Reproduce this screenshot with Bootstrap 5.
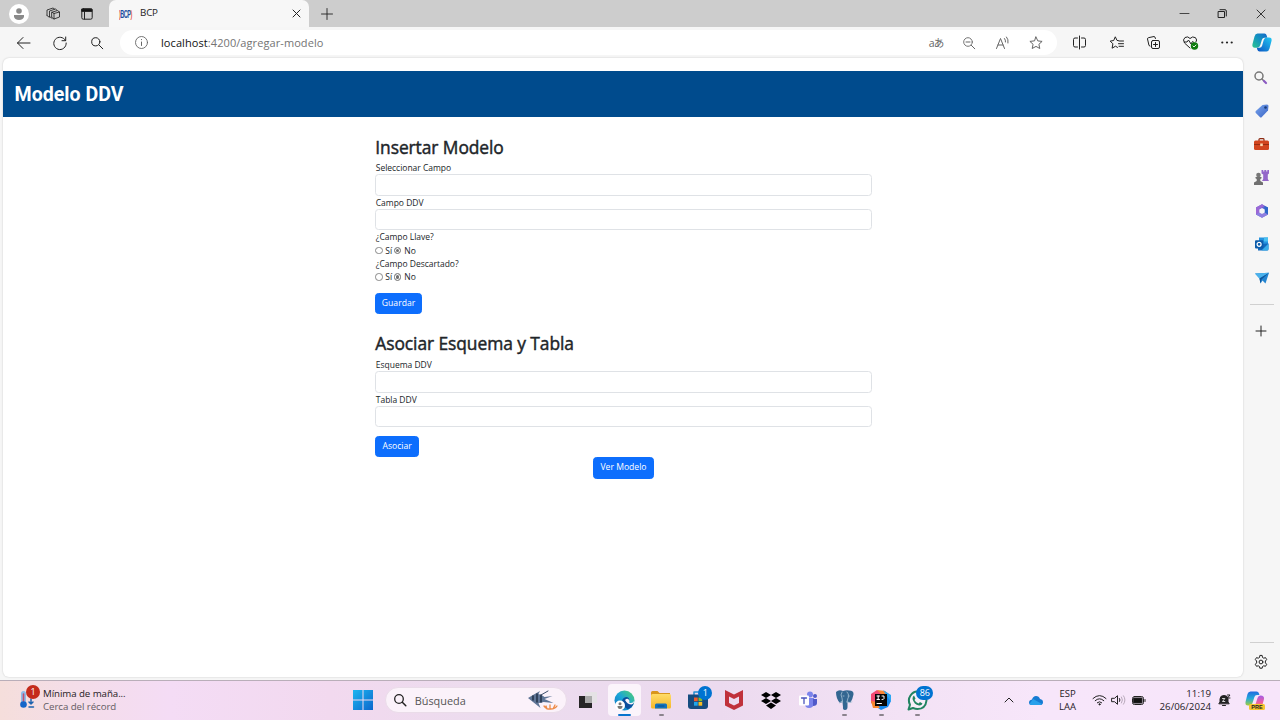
<!DOCTYPE html>
<html lang="es">
<head>
<meta charset="utf-8">
<meta name="viewport" content="width=device-width, initial-scale=1">
<title>BCP</title>
<link href="https://cdn.jsdelivr.net/npm/bootstrap@5.3.0/dist/css/bootstrap.min.css" rel="stylesheet">
<script src="https://cdn.jsdelivr.net/npm/bootstrap@5.3.0/dist/js/bootstrap.bundle.min.js" defer></script>
<style>
html{font-size:8.89px}
body{width:1280px;height:720px;overflow:hidden;background:#f6f6f6;font-family:"Open Sans","Noto Sans",sans-serif;color:#212529}
svg{display:block;flex:none;overflow:visible;fill:none;stroke:#222;stroke-width:1;stroke-linecap:round;stroke-linejoin:round}
.slot{display:flex;align-items:center;justify-content:center;flex:none}
.tabstrip{height:27px;background:#cdcdcd}
.tabstrip .slot{width:36px}
.tabstrip .avatar{width:20px;height:20px;border-radius:50%;background:#fff}
.browser-tab{width:200px;height:27px;background:#f7f7f7;border-radius:7px 7px 0 0;padding:0 8px 0 10px;font-size:9.800px;letter-spacing:-.2px;color:#222}
.favicon{font:bold 11px "Liberation Sans",sans-serif;letter-spacing:-1px;color:#1c4ea0;width:12px;transform:scaleX(.5);transform-origin:left;white-space:nowrap}
.favicon i{color:#e2574c;font-style:normal}
.toolbar{height:31px}
.toolbar .slot{width:37px}
.address{width:937px;height:25px;background:#fff;border-radius:13px;font-size:11px;color:#747474;letter-spacing:.08px;padding-right:4px}
.address b{font-weight:400;color:#111}
.address .slot{width:33.4px}
.address svg{stroke:#666}
.viewport{width:1240px;height:619px;margin-left:3.49px;background:#fff;border-radius:6px;box-shadow:0 0 2px rgba(0,0,0,.2);padding-top:13px}
.brandbar{height:46px;background:#004b8d;color:#fff;font:700 19.6px Roboto,sans-serif;padding-left:11px}
.model-form{width:496.4px;margin:19.5px auto 0}
.model-form h2{font-size:17.4px;font-weight:500;line-height:21.3px;margin-bottom:3.2px;letter-spacing:-.07px;-webkit-text-stroke:.45px #212529}
.model-form label,.model-form .radios{display:block;height:13.35px;line-height:13.35px;font-size:8.5px;letter-spacing:-.02px;padding-left:.5px}
.model-form .form-control{height:21.3px;min-height:0;padding:2px 6px;border-radius:3.5px;border-color:#dfe2e6}
.model-form .radios{display:flex;align-items:center;padding-left:0}
.radios .dot{width:7.500px;height:7.500px;border:1px solid #888;border-radius:50%;margin-right:2.5px}
.radios .dot.on{background:#707070;box-shadow:inset 0 0 0 1px #fff;margin-right:3.2px}
.btn-page{height:21.3px;padding:0;font-size:8.6px;line-height:19.3px;border-radius:3.5px;display:block}
.sidebar{width:36px}
.sidebar .slot{height:33.4px;width:36px}
.rule{width:24px;height:1px;background:#d0d0d0}
.taskbar{height:40px;border-top:1px solid #b9aeb9;background:linear-gradient(90deg,#f5dedb 0,#f4dde8 70px,#f4dcf5 170px,#f2d9ef 330px,#ecdcee 480px,#ecdaef 720px,#f3e2f5 900px,#f7e6fa 1040px,#f7e5fa 100%);margin-top:3px;font-size:9.700px;line-height:13px;color:#252025;padding-bottom:1px}
.taskbar .app{width:36.7px;height:38px;position:relative}
.running::after{content:"";position:absolute;bottom:3px;left:16px;width:5px;height:2px;border-radius:1px;background:#8b838d}
.focused::before{content:"";position:absolute;inset:3px 2px;background:#fbf4fb;border-radius:4px}
.focused::after{left:12px;width:13px;background:#0873ce}
.app svg{z-index:1;position:relative}
.count{position:absolute;background:#0073d1;color:#fff;border-radius:9px;height:14px;min-width:14px;text-align:center;font-size:9px;line-height:14px;z-index:2}
.search{width:182px;height:26px;border-radius:13px;background:#fbf2fa;border:1px solid #eadce9;padding:0 6px 0 9px;color:#555}
.fillicon{stroke:none}
</style>
</head>
<body class="d-flex flex-column">
<svg width="0" height="0" style="position:absolute"><defs>
<linearGradient id="gBlue" x1="0" y1="0" x2="1" y2="1"><stop stop-color="#1eb6f0"/><stop offset="1" stop-color="#0b66cc"/></linearGradient>
<linearGradient id="gTeal" x1="0" y1="1" x2="1" y2="0"><stop stop-color="#2bc58d"/><stop offset=".5" stop-color="#1395c0"/><stop offset="1" stop-color="#1668c8"/></linearGradient>
<linearGradient id="gCyan" x1="0" y1="1" x2="1" y2="0"><stop stop-color="#0a53c2"/><stop offset="1" stop-color="#21c9f3"/></linearGradient>
<linearGradient id="gTag" x1="0" y1="0" x2="1" y2="1"><stop stop-color="#79a6ee"/><stop offset="1" stop-color="#3a63c4"/></linearGradient>
<linearGradient id="gEdge" x1="0" y1="1" x2="1" y2="0"><stop stop-color="#0f6fc0"/><stop offset=".5" stop-color="#1ba5d8"/><stop offset="1" stop-color="#55d36b"/></linearGradient>
<linearGradient id="gFold" x1="0" y1="0" x2="0" y2="1"><stop stop-color="#ffdc68"/><stop offset="1" stop-color="#f5b72a"/></linearGradient>
<linearGradient id="gWarm" x1="0" y1="0" x2="0" y2="1"><stop stop-color="#a45be6"/><stop offset=".5" stop-color="#ee5fa0"/><stop offset="1" stop-color="#f9a33b"/></linearGradient>
<linearGradient id="gCool" x1="0" y1="0" x2="0" y2="1"><stop stop-color="#1f6be0"/><stop offset=".5" stop-color="#25a9d8"/><stop offset="1" stop-color="#a4cc3c"/></linearGradient>
</defs></svg>

<header class="tabstrip d-flex align-items-center">
  <div class="slot" style="width:37px"><div class="avatar slot"><svg class="fillicon" width="12" height="14"><circle cx="6" cy="4" r="2.800" fill="#8a8a8a"/><path d="M1 8h10v1.500a5 3.500 0 0 1-10 0z" fill="#8a8a8a"/></svg></div></div>
  <div class="slot" style="width:31px"><svg width="14" height="14"><path d="M6 5.200 11.500 3.500 13.500 5v5L8 12 6 10.500zM6 5.200 8 6.500 13.500 5M8 6.500V12M3.500 9.500V4L9.500 2 11 3.300M1 8.500V3L7 1 8.500 2M6 11.300 3.500 9.500M3.300 10.300 1 8.500" style="stroke-width:.85"/></svg></div>
  <div class="slot" style="width:37px"><svg width="12" height="12"><rect x=".8" y=".8" width="10.400" height="10.400" rx="1.500"/><path d="M1 1h10v2.400H1z" fill="#111"/><path d="M3.500 3.500V11"/></svg></div>
  <div class="browser-tab d-flex align-items-center" style="margin-left:4px"><span class="favicon"><i>)</i>BCP<i>)</i></span><span style="margin-left:9px">BCP</span><svg class="ms-auto" width="9" height="9"><path d="m1 1 7 7M8 1 1 8"/></svg></div>
  <div class="slot"><svg width="12" height="12"><path d="M6 .5v11M.5 6h11" style="stroke-width:.9"/></svg></div>
  <div class="d-flex ms-auto">
    <div class="slot" style="width:38px"><svg width="9" height="9" style="margin-right:2px"><path d="M0 4.500h9" style="stroke-width:.8"/></svg></div>
    <div class="slot" style="width:38px"><svg width="9" height="9" style="margin-right:2px"><path d="M.5 2.500h6v6h-6zM2 .7h5q1.300 0 1.300 1.300v5"/></svg></div>
    <div class="slot" style="width:38px"><svg width="8" height="8"><path d="m0 0 8 8M8 0 0 8" style="stroke-width:.9"/></svg></div>
  </div>
</header>

<div class="toolbar d-flex align-items-center">
  <div class="slot" style="margin-left:5px"><svg width="13" height="12"><path d="M13 6H.5M6 .5.5 6 6 11.500"/></svg></div>
  <div class="slot"><svg width="14" height="14" style="margin-right:2px"><path d="M12.500 4.500A6.200 6.200 0 1 0 13.200 7M12.700 1v3.700H9"/></svg></div>
  <div class="slot"><svg width="12" height="12" style="margin-right:2px"><circle cx="4.800" cy="4.800" r="4.100"/><path d="m8 8 3.800 3.800"/></svg></div>
  <div class="address d-flex align-items-center" style="margin-left:4px">
    <div class="slot" style="width:41px;padding-left:2px"><svg width="13" height="13"><circle cx="6.500" cy="6.500" r="6" style="stroke-width:.9"/><path d="M6.500 6v3.500M6.500 3.500v.2"/></svg></div>
    <span style="padding-top:1px"><b>localhost</b>:4200/agregar-modelo</span>
    <div class="slot ms-auto" style="font:10.500px 'Open Sans','Noto Sans CJK JP',sans-serif;letter-spacing:-.8px;color:#666">aあ</div>
    <div class="slot"><svg width="12" height="12" style="margin-right:2px"><circle cx="5" cy="5" r="4.300" style="stroke-width:.9"/><path d="m8.300 8.300 3.500 3.500M3 5h4"/></svg></div>
    <div class="slot"><svg width="13" height="12"><path d="M.5 11.500 4.500 1.500l4 10M2 8h5M8.500 1.500q1.300 1.500 1 3.500M10.500 0q2.200 2.500 1.500 6"/></svg></div>
    <div class="slot"><svg width="14" height="14"><path d="m7 1 1.800 3.900 4.300.5-3.200 2.900.9 4.200L7 10.400l-3.800 2.100.9-4.200L.9 5.400l4.300-.5z"/></svg></div>
  </div>
  <div class="slot" style="margin-left:4px"><svg width="13" height="13"><path d="M4.500 2H2Q.5 2 .5 3.500v6Q.5 11 2 11h2.500M8.500 2H11q1.500 0 1.500 1.500v6Q12.500 11 11 11H8.500M6.500 0v13"/></svg></div>
  <div class="slot"><svg width="14" height="14"><path d="M8.800 4.800 7 4.400 5.300.8 3.700 4.500l-3.500.6 2.700 2.700-.8 4.400 3.400-2 2 1.200M9.500 5H13.500M8.500 7.700h5M9 10.300h4.500"/></svg></div>
  <div class="slot"><svg width="13" height="13"><rect x="4.500" y="4.500" width="8" height="8" rx="1.500"/><path d="M8.500 6.500v4M6.500 8.500h4M3 10 2 9.500.5 3Q.4 2 1.400 1.700L7 .5q1.200 0 1.500 2"/></svg></div>
  <div class="slot"><svg width="15" height="14"><path d="M7 12 1.500 7Q-.7 3.500 2 1.500 5-.2 7 2.500 9.500-.2 12.500 1.700 14.600 4 13 6M1.500 6H4l1.500-2L8 8l1.500-2.500 1.500 1"/><circle cx="11.500" cy="10" r="3.700" fill="#107c10" stroke="none"/><path d="m10 10 1 1 2-2" style="stroke:#fff;stroke-width:.9"/></svg></div>
  <div class="slot"><svg class="fillicon" width="12" height="3" style="margin-right:2px"><g fill="#222"><circle cx="1.300" cy="1.500" r="1.100"/><circle cx="6" cy="1.500" r="1.100"/><circle cx="10.700" cy="1.500" r="1.100"/></g></svg></div>
  <div class="slot" style="width:32px"><svg class="fillicon" width="20" height="19"><path d="M5.500.5h7q1.700 0 2.200 2l.6 2.300H12.500q-2 0-2.600 2L8.300 12q-.7 2.700-3 2.700H3Q-.3 14.700.5 11l2-7.500Q3.300.5 5.500.5z" fill="url(#gTeal)"/><path d="M14.500 18.500h-7q-1.700 0-2.200-2l-.5-1.800H7.500q2 0 2.600-2L11.700 7q.7-2.500 3-2.500H17q3.300 0 2.500 3.500l-2 7.500q-.8 3-3 3z" fill="url(#gCyan)"/></svg></div>
</div>

<div class="d-flex">
  <main class="viewport">
    <div class="brandbar d-flex align-items-center">Modelo DDV</div>
    <form class="model-form">
      <h2>Insertar Modelo</h2>
      <label for="campo">Seleccionar Campo</label><input id="campo" class="form-control">
      <label for="ddv">Campo DDV</label><input id="ddv" class="form-control">
      <label>¿Campo Llave?</label>
      <div class="radios"><span class="dot"></span>Sí<span class="dot on" style="margin-left:1.500px"></span>No</div>
      <label>¿Campo Descartado?</label>
      <div class="radios"><span class="dot"></span>Sí<span class="dot on" style="margin-left:1.500px"></span>No</div>
      <button type="button" class="btn btn-primary btn-page" style="margin-top:9px;width:46.500px">Guardar</button>
      <h2 style="margin-top:19.500px">Asociar Esquema y Tabla</h2>
      <label for="esq">Esquema DDV</label><input id="esq" class="form-control">
      <label for="tab">Tabla DDV</label><input id="tab" class="form-control">
      <button type="button" class="btn btn-primary btn-page" style="margin-top:8.800px;width:43.800px">Asociar</button>
      <button type="button" class="btn btn-primary btn-page mx-auto" style="width:60.500px">Ver Modelo</button>
    </form>
  </main>
  <aside class="sidebar d-flex flex-column align-items-center" style="padding-top:2.500px;padding-left:1px">
    <div class="slot"><svg width="13" height="13" style="margin-right:2px"><circle cx="5" cy="5" r="4" style="stroke:#777;stroke-width:1.500"/><path d="M8 8l1.500 1.500" style="stroke:#777;stroke-width:1.500"/><path d="m10 10 2 2" style="stroke:#8b5ac2;stroke-width:2.200"/></svg></div>
    <div class="slot"><svg class="fillicon" width="14" height="14"><path d="M7.500 1 12 .5q1.500 0 1.500 1.500L13 6.500 6.800 13q-1 1-2 0L.8 9q-.8-1 0-2z" fill="url(#gTag)"/><circle cx="10.500" cy="3.500" r="1.300" fill="#183b78"/></svg></div>
    <div class="slot"><svg class="fillicon" width="15" height="12"><path d="M5 3V1.500Q5 .7 6 .7h3q1 0 1 .8V3" style="stroke:#8d2b12;stroke-width:1.200"/><rect y="2.500" width="15" height="9.500" rx="1.500" fill="#d2451e"/><path d="M0 6h15v1H0z" fill="#972d11"/><rect x="6.200" y="5.500" width="2.600" height="2.600" fill="#ffd8ae"/></svg></div>
    <div class="slot"><svg class="fillicon" width="15" height="15"><path d="M7.500 0h1.800v1.500h1V0h2v1.500h1V0H15v3.500l-1.200 1V9l1.200 2H8l1.200-2V4.500L7.500 3.500z" fill="#9467c9"/><circle cx="4.500" cy="5" r="2.300" fill="#777"/><path d="M1.500 7h6v1.200L6.300 9v2L9 12.500V15H0v-2.500L2.700 11V9L1.500 8.200z" fill="#707070"/></svg></div>
    <div class="slot"><svg class="fillicon" width="14" height="14"><path d="M7 .2 13 3.500v7L7 13.800 1 10.500v-7z" fill="#5d66d2"/><path d="M7 .2 1 3.500v7L4.500 9V5L9.500 2z" fill="#9b68d6"/><path d="m1 10.500 3.300-2.200L7 9.800l6-3v3.700L7 13.800z" fill="#8f7fe0"/><path d="m9.500 2 3.500 1.500v7L9.500 8.500z" fill="#2d67c9"/><path d="M7 4 9.700 5.500v3L7 10 4.300 8.500v-3z" fill="#f6f6f6"/></svg></div>
    <div class="slot"><svg class="fillicon" width="14" height="14"><path d="M4 .5h9v7H4z" fill="#2493df"/><path d="M9 .5h4v4H9z" fill="#49c0f1"/><path d="M3 7l10.500-.5V12q0 1.500-1.500 1.500H3z" fill="#1269bd"/><path d="m13.500 6.500-7 7H12q1.500 0 1.500-1.500z" fill="#38aeea"/><rect y="3.200" width="8.300" height="8.300" rx="1" fill="#0b5cab"/><circle cx="4.100" cy="7.300" r="2" style="stroke:#fff;stroke-width:1.200"/></svg></div>
    <div class="slot"><svg class="fillicon" width="14" height="12"><path d="M0 1.500 14 .8 10.500 11.500 7.500 8.500 5.500 11.500 4.500 6.500z" fill="#2385d1"/><path d="M0 1.500 14 .8 4.500 6.500z" fill="#4ab2ec"/><path d="M14 .8 6.500 7.500l-1 4-1-5z" fill="#0d559c"/></svg></div>
    <div class="rule" style="margin-top:9.500px"></div>
    <div class="slot" style="height:52px"><svg width="10" height="10" style="margin-right:1px"><path d="M5 0v10M0 5h10"/></svg></div>
    <div class="mt-auto rule"></div>
    <div class="slot" style="height:34px;padding-top:3px"><svg width="14" height="14" style="margin-right:1px"><path d="m5.800.8-.3 1.700-1.300.7-1.700-.6-1.200 2L2.600 6v1.900L1.300 9.300l1.200 2 1.700-.5 1.300.7.3 1.700h2.400l.3-1.700 1.300-.7 1.700.5 1.200-2-1.300-1.400V6l1.300-1.400-1.200-2-1.700.6-1.300-.7-.3-1.700z"/><circle cx="7" cy="7" r="1.900"/></svg></div>
  </aside>
</div>

<footer class="taskbar d-flex align-items-center">
  <div class="d-flex align-items-center" style="width:345px;padding-left:19px">
    <div class="position-relative" style="width:24px;height:26px">
      <svg class="fillicon" width="18" height="26"><rect x="2" y="4" width="5" height="13" rx="2.500" fill="#8ebbe9"/><path d="M4.500 7v10" style="stroke:#c0506e;stroke-width:1.600"/><circle cx="4.500" cy="17.500" r="3.300" fill="#1465c9"/><path d="M12 12v5m-2-2L12 17l2-2M10 20h4.500" style="stroke:#1d63af;stroke-width:1.500"/></svg>
      <span class="count" style="background:#c42b1c;left:7px;top:-2px">1</span>
    </div>
    <div style="letter-spacing:-.06px"><div>Mínima de maña...</div><div style="color:#655c64">Cerca del récord</div></div>
  </div>
  <div class="app slot"><svg class="fillicon" width="20" height="20"><path d="M0 0h9.500v9.500H0zM10.500 0H20v9.500h-9.500zM0 10.500h9.500V20H0zM10.500 10.500H20V20h-9.500z" fill="url(#gBlue)"/></svg></div>
  <div class="search d-flex align-items-center" style="margin-left:3px">
    <svg width="12" height="12" style="margin-left:-1px"><circle cx="5" cy="5" r="4.300" style="stroke-width:1.300"/><path d="m8.300 8.300 3.500 3.500" style="stroke-width:1.500"/></svg><span style="margin-left:9px;font-size:10.900px">Búsqueda</span>
    <svg class="ms-auto fillicon" width="32" height="21"><path d="M0 8 5 5 12 1 10.500 4q4 1 6 3l8-1-8 3 9 4-10-1q-2 1-5 1l2 5-5-4z" fill="#5f7596"/><path d="M5 6v4M9 4v8M13 5v7" style="stroke:#26364e;stroke-width:1.600"/><path d="M13 5 20 1" style="stroke:#3d4f6b"/><path d="M16 16q3 4 7 3 4 0 6-3M19 19l-1-3M22 19v-4M25 19l2-4" style="stroke:#ee8b48;stroke-width:1.300"/></svg>
  </div>
  <div class="app slot" style="margin-left:2.500px"><svg class="fillicon" width="20" height="18"><path d="M1 5h13v12H1z" fill="#262626"/><path d="M7 1h12v11H7z" fill="#e4e2e4" opacity=".93"/><path d="M7 5h7v7H7z" fill="#aaa"/></svg></div>
  <div class="app slot running focused"><svg class="fillicon" width="21" height="21"><circle cx="10.500" cy="10.500" r="10" fill="url(#gEdge)"/><path d="M8 11q1-4 5-4 3 1 2 4-1 2 1 2.500 2 .5 4-.8-2 5-6 6.500-5-2-6-8.200z" fill="#0c4f9d"/><path d="M11 10q3-3 4.500 1-1 2 .5 2 3 .5 4-2 0 3-2.500 3.500-4 0-6.500-4.500z" fill="#fbf4fb"/><circle cx="6" cy="15.500" r="5" fill="#fff"/><circle cx="6" cy="13.700" r="1.500" fill="#777"/><path d="M3.500 16h5q0 3-2.500 3t-2.500-3z" fill="#777"/></svg></div>
  <div class="app slot running"><svg class="fillicon" width="20" height="18"><path d="M0 1.500Q0 0 1.500 0h5l2 2H19v5H0z" fill="#d9961c"/><rect y="3" width="20" height="14.500" rx="1.500" fill="url(#gFold)"/><path d="M4 17.500V14q0-1.500 1.500-1.500h9Q16 12.500 16 14v3.500z" fill="#1473bd"/><path d="M7 15h6" style="stroke:#0b4e8c"/></svg></div>
  <div class="app slot"><svg class="fillicon" width="20" height="20"><path d="M6 5V2h8v3" style="stroke:#218fd2;stroke-width:1.500"/><path d="M0 4.500h20V16q0 3-3 3H3q-3 0-3-3z" fill="#154c80"/><path d="M6 7.500h3.700v3.700H6z" fill="#f15b2b"/><path d="M10.500 7.500h3.700v3.700h-3.700z" fill="#83bd31"/><path d="M6 12h3.700v3.700H6z" fill="#20a7ea"/><path d="M10.500 12h3.700v3.700h-3.700z" fill="#f8bd21"/></svg><span class="count" style="left:19px;top:5px">1</span></div>
  <div class="app slot"><svg class="fillicon" width="18" height="20"><path d="M0 0 9 4.500 18 0v15.500L9 20 0 15.500zM4 6.500V13l5 2.500 5-2.500V6.500L9 9z" fill="#c0313b" fill-rule="evenodd"/></svg></div>
  <div class="app slot"><svg class="fillicon" width="20" height="17"><path d="m5 0 5 3-5 3-5-3zM15 0l5 3-5 3-5-3zM5 6l5 3-5 3-5-3zM15 6l5 3-5 3-5-3zM10 10.500l5 3-5 3.500-5-3.500z" fill="#000"/></svg></div>
  <div class="app slot"><svg class="fillicon" width="18" height="18"><circle cx="11" cy="3.500" r="3" fill="#7b83eb"/><circle cx="16" cy="5" r="2" fill="#5059c9"/><path d="M6 7h9v6q-1 4-5 4t-4-4z" fill="#7b83eb"/><path d="M14 8h4v4q0 3-4 3z" fill="#5059c9"/><rect y="4.500" width="10" height="10" rx="1" fill="#fff"/><path d="M2.500 7h5M5 7v5.500" style="stroke:#4b53bc;stroke-width:1.300"/></svg></div>
  <div class="app slot running"><svg class="fillicon" width="19" height="20"><path d="M1 2q3-3 7-1 3-1 6-.5 5 0 4.500 4-1 5-3 8l-3-.5V17q0 3-2.500 3T8 17l-.5-5L5 13Q1 9 1 2z" fill="#336791"/><path d="M7 2Q5 5 7 8l.5 4M12 2q3 4 1 6l-1 4M7.500 11q-2 1-3 2M12 12q3 1 5 0M8 6h1M13 6h1" style="stroke:#a9c3d6;stroke-width:.8"/></svg></div>
  <div class="app slot running"><svg class="fillicon" width="20" height="20"><path d="M0 4 6 0l7 4-8 12-5-3z" fill="#f44a72"/><path d="m6 0 8 1 6 5-3 5z" fill="#f98632"/><path d="m10 14 7-9 3 6-3 6-7 3-6-4z" fill="#1688ed"/><path d="M12 0l8 5v7l-4-6z" fill="#2aa6f2"/><path d="M0 11 5 12l4 6-7 0z" fill="#f7882e"/><rect x="4" y="4" width="12" height="12" fill="#080808"/><path d="M6 6h2.500M7.200 6v3.500M6 9.500h2.500M11 6h2v2.700q0 .8-2 .8M6 13.500h4.500" style="stroke:#fff"/></svg></div>
  <div class="app slot running"><svg class="fillicon" width="21" height="21"><path d="M1.500 19.500 3 14.700Q.5 10 3.500 5.500T11 1.500q8 1 8.500 9-1 8.500-9 8.500-2 0-4.500-1z" fill="#f7eef9" style="stroke:#218461;stroke-width:2"/><path d="M7 5.500 8.500 8.500 7.500 10q1.500 3 4 3.500L13 12l2.500 1.500Q14.500 16 12 15.500 7 14.500 5.500 9 5.500 6 7 5.500z" fill="#218461"/></svg><span class="count" style="left:17px;top:5px;width:17px">86</span></div>
  <div class="d-flex align-items-center ms-auto" style="width:279px">
    <div class="slot" style="width:16px"><svg width="8" height="6"><path d="m0 5 4-4 4 4"/></svg></div>
    <div class="slot" style="width:37px"><svg class="fillicon" width="14" height="9"><path d="M3 9Q0 9 0 6.500 0 4 3 3.500 4 0 7 0q3 0 4 3 3 .5 3 3.200Q14 9 11 9z" fill="#157bd2"/><path d="m4 3 9 5Q12 9 11 9H3Q1 9 .5 8z" fill="#28a0eb"/></svg></div>
    <div class="text-center" style="width:27px;font-size:9.500px">ESP<br>LAA</div>
    <div class="slot" style="width:36px"><svg width="13" height="10"><path d="M0 3.500q6.500-6 13 0M2.200 5.700q4.300-4 8.600 0M4.300 7.700q2.200-2 4.400 0"/><circle cx="6.500" cy="9.300" r=".6" fill="#222"/></svg></div>
    <div class="slot" style="width:2px"><svg width="13" height="10"><path d="M0 3.300h2.500L5.500.7v8.600L2.500 6.700H0zM7.500 3.500q1 1.500 0 3"/><path d="M9.500 2q2 3 0 6M11.500.8q3 4.200 0 8.400" style="stroke:#b8a9ba"/></svg></div>
    <div class="slot" style="width:39px"><svg width="14" height="9"><rect x=".5" y=".5" width="11" height="8" rx="2"/><rect x="2" y="2" width="8" height="5" fill="#111"/><path d="M13 3.500v2"/></svg></div>
    <div class="d-flex flex-column align-items-end" style="width:53px;font-size:9.700px;white-space:nowrap"><span>11:19</span><span>26/06/2024</span></div>
    <div class="slot" style="width:26px"><svg width="12" height="13"><path d="M1 9.500 2 8V5q0-3.500 4-3.500T10 5v3l1 1.500z" fill="#222"/><path d="M4.500 11.500h3M9.500 1H12L9.500 4H12"/><path d="M4.500 4.500h2.300l-2.300 3h2.300" style="stroke:#fff;stroke-width:.8"/></svg></div>
    <div class="slot position-relative" style="width:34px"><svg class="fillicon" width="19" height="19"><path d="M5.500.5h6q2 0 2.500 2l.4 1.500H12q-2 0-2.600 2L7.500 12q-.7 2.500-3 2.500H3Q0 14.500.5 11l2-8Q3.200.5 5.500.5z" fill="url(#gCool)"/><path d="M14.500 18H8.500Q6 18 5.500 15H8q2 0 2.600-2l1.900-6q.7-2.500 3-2.500 4 0 3.500 3.500l-2 7.500q-.7 2.500-2.500 2.500z" fill="url(#gWarm)"/></svg><span class="slot" style="position:absolute;left:12px;top:13px;width:16px;height:6px;background:#f7c52f;border-radius:1.500px;font:bold 5.500px 'Liberation Sans',sans-serif;color:#222">PRE</span></div>
  </div>
</footer>
</body>
</html>
